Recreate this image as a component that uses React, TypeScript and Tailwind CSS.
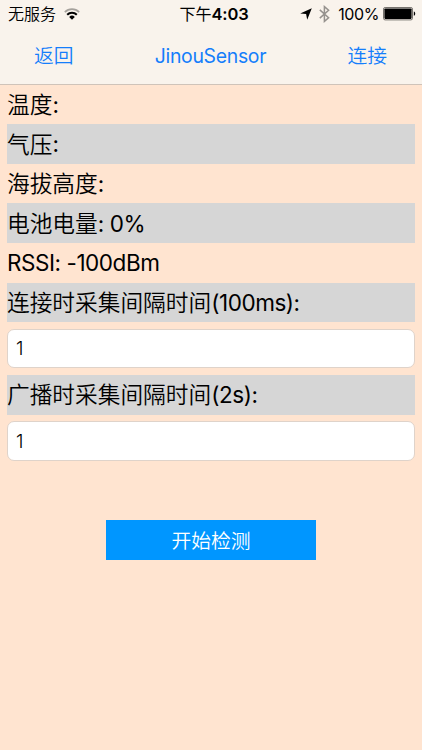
import React, { useState } from 'react';
import clsx from 'clsx';

const WifiIcon = () => (
  <svg width="16" height="12" viewBox="0 0 16 12" fill="none">
    <path d="M0.8 4.1a10.2 10.2 0 0 1 14.4 0" stroke="#a5a19c" strokeWidth="1.6" />
    <path d="M3.2 6.7a6.8 6.8 0 0 1 9.6 0" stroke="#000" strokeWidth="2" />
    <path d="M8 11.8 5.2 8.9a4 4 0 0 1 5.6 0z" fill="#000" />
  </svg>
);

const LocationIcon = () => (
  <svg width="12" height="12" viewBox="0 0 12 12">
    <path d="M11.8 0.2 7.2 11.8 6.1 6.1 0.2 5.4z" fill="#000" />
  </svg>
);

const BluetoothIcon = () => (
  <svg width="11" height="18" viewBox="0 0 11 18" fill="none" stroke="#96928e" strokeWidth="1.5">
    <path d="M0.8 4.9 9.6 12.7 5.4 16.4V1.6L9.6 5.3 0.8 13.1" />
  </svg>
);

const BatteryIcon = () => (
  <svg width="33" height="14" viewBox="0 0 33 14">
    <rect x="0.5" y="0.5" width="29" height="12.4" rx="1.6" fill="#f9f3ec" stroke="#77736e" />
    <rect x="1.4" y="1.5" width="27.2" height="10.4" rx="0.8" fill="#000" />
    <path d="M30.8 4.6c1.9 0.4 1.9 3.8 0 4.2z" fill="#000" />
  </svg>
);

interface RowProps {
  label?: string;
  value: string;
  shaded?: boolean;
}

const Row = ({ label, value, shaded }: RowProps) => (
  <div
    className={clsx(
      'flex h-[39.6px] items-center pt-[2px] text-[22.7px] leading-none whitespace-pre',
      shaded && 'bg-[#d6d6d6]'
    )}
  >
    {label}
    <span className="pb-px text-[22.5px] font-[380] tracking-[-0.45px]">{value}</span>
  </div>
);

interface FieldProps {
  value: string;
  onChange: (value: string) => void;
}

const Field = ({ value, onChange }: FieldProps) => (
  <input
    type="text"
    value={value}
    onChange={(e) => onChange(e.target.value)}
    className="my-[6.6px] block h-[39.6px] w-full rounded-[7px] border border-[#dfd3ca] bg-white px-[8px] text-[19px] outline-none"
  />
);

export default function App() {
  const [connected, setConnected] = useState('1');
  const [broadcast, setBroadcast] = useState('1');

  return (
    <div className="flex h-[750px] w-full flex-col overflow-hidden bg-[#ffe4d0] font-[Inter,'Noto_Sans_CJK_SC',sans-serif] font-[350] text-black">
      <header className="h-[84.7px] shrink-0 border-b border-[#cfc3b9] bg-[#f9f3ec]">
        <div className="grid h-7 grid-cols-[1fr_auto_1fr] items-center pr-[6px] pl-[8px] text-[16px] leading-none">
          <div className="flex items-center gap-[8px]">
            <span>无服务</span>
            <WifiIcon />
          </div>
          <span className="relative left-[2px] font-normal">
            下午<span className="text-[16.5px] font-semibold tracking-[-0.1px]">4:03</span>
          </span>
          <div className="flex items-center justify-end">
            <LocationIcon />
            <span className="ml-[7px]"><BluetoothIcon /></span>
            <span className="ml-[8px] font-normal tracking-[-0.4px]">100%</span>
            <span className="ml-[4px]"><BatteryIcon /></span>
          </div>
        </div>
        <div className="grid h-14 grid-cols-[1fr_auto_1fr] items-center pt-[2px] pr-[35px] pl-[34px] text-[19.8px] leading-none text-[#157efb]">
          <button className="justify-self-start">返回</button>
          <span className="text-[19.4px] font-[380] tracking-[-0.3px]">JinouSensor</span>
          <button className="justify-self-end">连接</button>
        </div>
      </header>

      <main className="flex flex-col px-[7px]">
        <Row label="温度" value=":" />
        <Row label="气压" value=":" shaded />
        <Row label="海拔高度" value=":" />
        <Row label="电池电量" value=": 0%" shaded />
        <Row value="RSSI: -100dBm" />
        <Row label="连接时采集间隔时间" value="(100ms):" shaded />
        <Field value={connected} onChange={setConnected} />
        <Row label="广播时采集间隔时间" value="(2s):" shaded />
        <Field value={broadcast} onChange={setBroadcast} />
        <button className="mt-[52.5px] h-[39.6px] w-[210.6px] self-center bg-[#0096ff] pt-[4px] text-[19.8px] leading-none text-white">
          开始检测
        </button>
      </main>
    </div>
  );
}
